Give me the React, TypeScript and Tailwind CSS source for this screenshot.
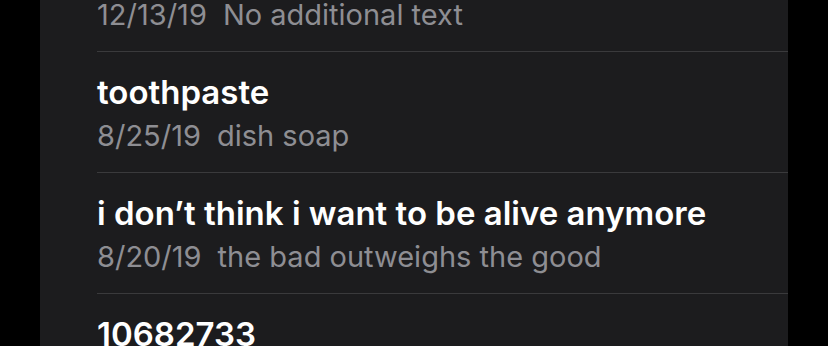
import React from "react";

const notes = [
  { title: "\u00a0", date: "12/13/19", text: "No additional text" },
  { title: "toothpaste", date: "8/25/19", text: "dish soap" },
  { title: "i don\u2019t think i want to be alive anymore", date: "8/20/19", text: "the bad outweighs the good" },
  { title: "10682733", date: "", text: "" },
];

export default function App() {
  return (
    <div className="w-[828px] h-[346px] bg-black overflow-hidden flex" style={{ fontFamily: "Inter, 'Noto Sans', sans-serif" }}>
      <div className="ml-[40px] w-[748px] h-full bg-[#1c1c1e] overflow-hidden">
        <div className="-mt-[69px] flex flex-col">
          {notes.map((n, i) => (
            <div key={i} className="pl-[57px]">
              <div className="border-b border-[#3a3a3c] pt-[22px] pb-[10px]">
                <div className="text-[33px] leading-[36px] font-semibold text-white whitespace-nowrap">{n.title}</div>
                <div className="text-[29px] leading-[52px] text-[#8e8e93] whitespace-nowrap">
                  {n.date}
                  <span className="ml-[16px]">{n.text}</span>
                </div>
              </div>
            </div>
          ))}
        </div>
      </div>
    </div>
  );
}
